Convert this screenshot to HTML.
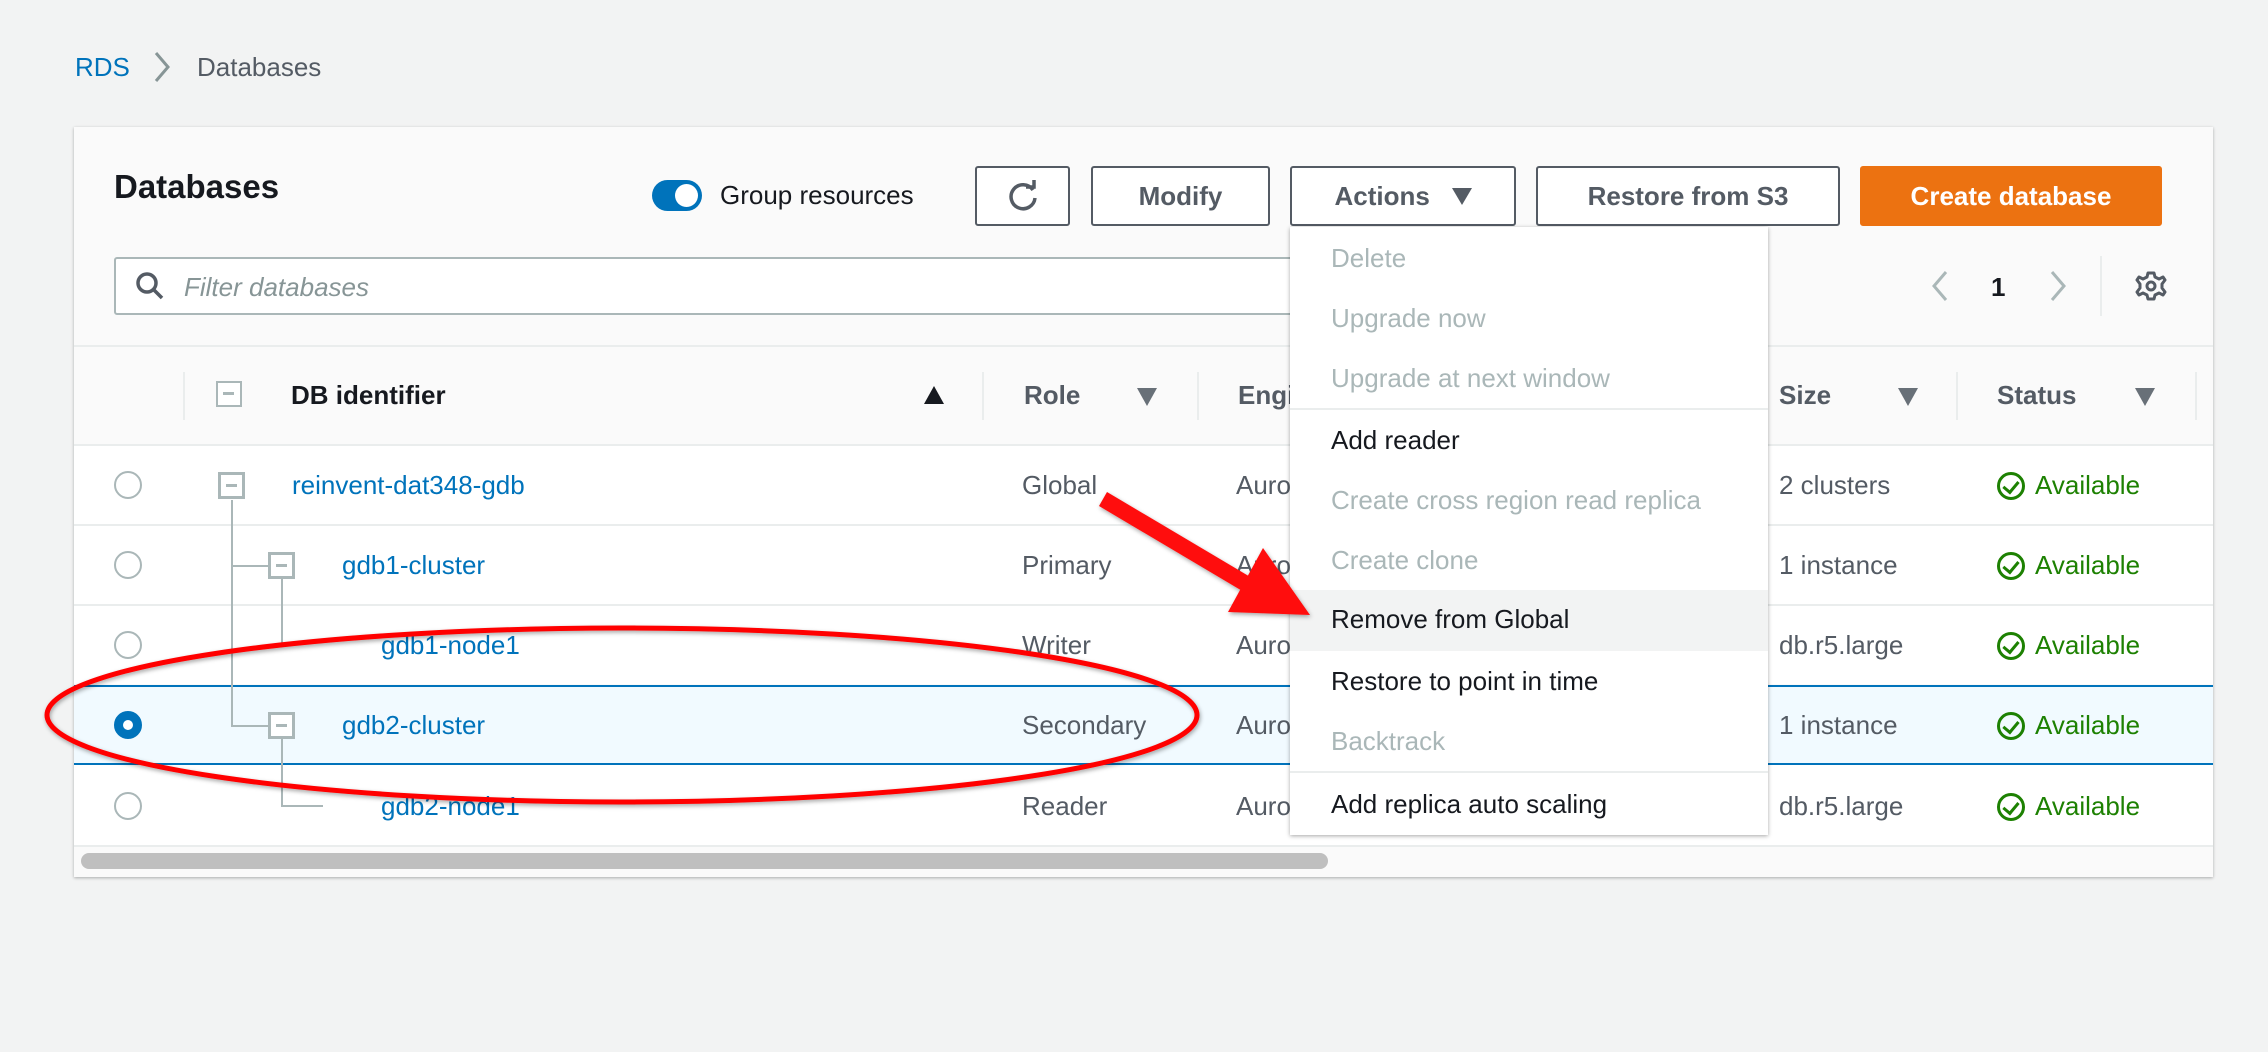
<!DOCTYPE html>
<html><head><meta charset="utf-8"><style>
*{box-sizing:border-box;margin:0;padding:0}
body{width:2268px;height:1052px;background:#f2f3f3;font-family:"Liberation Sans",sans-serif;color:#16191f;position:relative;overflow:hidden;font-size:26px}
.a{position:absolute;white-space:nowrap}
.btn{position:absolute;top:166px;height:60px;border:2px solid #545b64;border-radius:3px;background:#fff;color:#545b64;font-weight:bold;font-size:26px;display:flex;align-items:center;justify-content:center}
.row{position:absolute;left:74px;width:2139px;height:80px;background:#fff;border-top:2px solid #eaeded}
.lnk{color:#0073bb}
.mi{position:absolute;left:1331px;font-size:26px;line-height:30px}
.dis{color:#aab7b8}
.ok{color:#1d8102;display:flex;align-items:center;gap:10px}
.ok i{display:block;width:28px;height:28px;border:3px solid #1d8102;border-radius:50%;position:relative}
.ok i:after{content:"";position:absolute;left:6px;top:3px;width:7px;height:12px;border-right:3px solid #1d8102;border-bottom:3px solid #1d8102;transform:rotate(40deg)}
.radio{position:absolute;left:114px;width:28px;height:28px;border:2px solid #aab7b8;border-radius:50%;background:#fff}
.box{position:absolute;width:27px;height:27px;border:3px solid #aab7b8;background:#fff}
.box:after{content:"";position:absolute;left:5px;top:9px;width:11px;height:3px;background:#aab7b8}
.vl{position:absolute;width:2px;background:#aab7b8}
.hl{position:absolute;height:2px;background:#aab7b8}
.cd{position:absolute;top:372px;width:2px;height:48px;background:#eaeded}
.tri{position:absolute;top:386px;width:0;height:0;border-left:10px solid transparent;border-right:10px solid transparent}
.dn{border-top:18px solid #687078}
.up{border-bottom:18px solid #16191f}
</style></head><body>
<div class="a lnk" style="left:75px;top:52px">RDS</div>
<svg class="a" style="left:152px;top:50px" width="20" height="34"><path d="M4 3 L16 17 L4 31" stroke="#879596" stroke-width="3" fill="none"/></svg>
<div class="a" style="left:197px;top:52px;color:#545b64">Databases</div>

<div class="a" style="left:74px;top:127px;width:2139px;height:750px;background:#fafafa;box-shadow:0 1px 3px rgba(0,0,0,.3)"></div>
<div class="a" style="left:114px;top:168px;font-size:33px;font-weight:bold">Databases</div>
<div class="a" style="left:652px;top:180px;width:50px;height:31px;border-radius:16px;background:#0073bb"></div>
<div class="a" style="left:675px;top:184px;width:23px;height:23px;border-radius:50%;background:#fff"></div>
<div class="a" style="left:720px;top:180px">Group resources</div>
<div class="btn" style="left:975px;width:95px"><svg width="36" height="36" viewBox="0 0 36 36"><path d="M28 12 A12 12 0 1 0 30 20" stroke="#545b64" stroke-width="3.5" fill="none"/><path d="M21 9 L29 9 L29 2" stroke="#545b64" stroke-width="3.5" fill="none"/></svg></div>
<div class="btn" style="left:1091px;width:179px">Modify</div>
<div class="btn" style="left:1290px;width:226px">Actions&nbsp;&nbsp;&nbsp;<span style="display:inline-block;width:0;height:0;border-left:10px solid transparent;border-right:10px solid transparent;border-top:17px solid #545b64"></span></div>
<div class="btn" style="left:1536px;width:304px">Restore from S3</div>
<div class="btn" style="left:1860px;width:302px;background:#ec7211;border-color:#ec7211;color:#fff">Create database</div>

<div class="a" style="left:114px;top:257px;width:1200px;height:58px;border:2px solid #aab7b8;border-radius:3px;background:#fff"></div>
<svg class="a" style="left:134px;top:270px" width="32" height="32"><circle cx="13" cy="13" r="9" stroke="#545b64" stroke-width="3.5" fill="none"/><path d="M20 20 L28 28" stroke="#545b64" stroke-width="3.5"/></svg>
<div class="a" style="left:184px;top:272px;font-style:italic;color:#879596">Filter databases</div>
<svg class="a" style="left:1928px;top:268px" width="24" height="36"><path d="M18 4 L6 18 L18 32" stroke="#aab7b8" stroke-width="3" fill="none"/></svg>
<div class="a" style="left:1991px;top:272px;font-weight:bold">1</div>
<svg class="a" style="left:2046px;top:268px" width="24" height="36"><path d="M6 4 L18 18 L6 32" stroke="#aab7b8" stroke-width="3" fill="none"/></svg>
<div class="a" style="left:2100px;top:256px;width:2px;height:60px;background:#eaeded"></div>
<svg class="a" style="left:2135px;top:270px" width="32" height="32" viewBox="0 0 32 32"><path d="M16 3 L19 3 L20 7 L24 9 L28 7 L30 10 L27 14 L27 18 L30 22 L28 25 L24 23 L20 25 L19 29 L13 29 L12 25 L8 23 L4 25 L2 22 L5 18 L5 14 L2 10 L4 7 L8 9 L12 7 L13 3 Z" stroke="#545b64" stroke-width="3" fill="none" stroke-linejoin="round"/><circle cx="16" cy="16" r="4" stroke="#545b64" stroke-width="3" fill="none"/></svg>

<div class="a" style="left:74px;top:345px;width:2139px;height:2px;background:#eaeded"></div>
<div class="cd" style="left:183px"></div><div class="cd" style="left:982px"></div><div class="cd" style="left:1197px"></div><div class="cd" style="left:1956px"></div><div class="cd" style="left:2195px"></div>
<div class="box" style="left:216px;top:381px;border-width:2px;width:26px;height:26px"></div>
<div class="a" style="left:291px;top:380px;font-weight:bold">DB identifier</div>
<div class="tri up" style="left:924px"></div>
<div class="a" style="left:1024px;top:380px;font-weight:bold;color:#545b64">Role</div>
<div class="tri dn" style="left:1137px;top:388px"></div>
<div class="a" style="left:1238px;top:380px;font-weight:bold;color:#545b64">Engine</div>
<div class="a" style="left:1779px;top:380px;font-weight:bold;color:#545b64">Size</div>
<div class="tri dn" style="left:1898px;top:388px"></div>
<div class="a" style="left:1997px;top:380px;font-weight:bold;color:#545b64">Status</div>
<div class="tri dn" style="left:2135px;top:388px"></div>

<div class="row" style="top:444px"></div>
<div class="row" style="top:524px"></div>
<div class="row" style="top:604px"></div>
<div class="row" style="top:685px;background:#f1faff;border-top:2px solid #0073bb;border-bottom:2px solid #0073bb;height:80px"></div>
<div class="row" style="top:765px;border-top:none"></div>
<div class="a" style="left:74px;top:845px;width:2139px;height:2px;background:#eaeded"></div>
<div class="a" style="left:81px;top:853px;width:1247px;height:16px;border-radius:8px;background:#bfbfbf"></div>

<div class="radio" style="top:471px"></div>
<div class="radio" style="top:551px"></div>
<div class="radio" style="top:631px"></div>
<div class="radio" style="top:711px;border:9px solid #0073bb"></div>
<div class="radio" style="top:792px"></div>

<div class="vl" style="left:231px;top:500px;height:227px"></div>
<div class="hl" style="left:231px;top:565px;width:40px"></div>
<div class="hl" style="left:231px;top:725px;width:40px"></div>
<div class="vl" style="left:281px;top:578px;height:68px"></div>
<div class="vl" style="left:281px;top:738px;height:69px"></div>
<div class="hl" style="left:281px;top:805px;width:42px"></div>
<div class="box" style="left:218px;top:472px"></div>
<div class="box" style="left:268px;top:552px"></div>
<div class="box" style="left:268px;top:712px"></div>

<div class="a lnk" style="left:292px;top:470px">reinvent-dat348-gdb</div>
<div class="a lnk" style="left:342px;top:550px">gdb1-cluster</div>
<div class="a lnk" style="left:381px;top:630px">gdb1-node1</div>
<div class="a lnk" style="left:342px;top:710px">gdb2-cluster</div>
<div class="a lnk" style="left:381px;top:791px">gdb2-node1</div>
<div class="a" style="left:1022px;top:470px;color:#545b64">Global</div>
<div class="a" style="left:1022px;top:550px;color:#545b64">Primary</div>
<div class="a" style="left:1022px;top:630px;color:#545b64">Writer</div>
<div class="a" style="left:1022px;top:710px;color:#545b64">Secondary</div>
<div class="a" style="left:1022px;top:791px;color:#545b64">Reader</div>
<div class="a" style="left:1236px;top:470px;color:#545b64">Aurora</div>
<div class="a" style="left:1236px;top:550px;color:#545b64">Aurora</div>
<div class="a" style="left:1236px;top:630px;color:#545b64">Aurora</div>
<div class="a" style="left:1236px;top:710px;color:#545b64">Aurora</div>
<div class="a" style="left:1236px;top:791px;color:#545b64">Aurora</div>
<div class="a" style="left:1779px;top:470px;color:#545b64">2 clusters</div>
<div class="a" style="left:1779px;top:550px;color:#545b64">1 instance</div>
<div class="a" style="left:1779px;top:630px;color:#545b64">db.r5.large</div>
<div class="a" style="left:1779px;top:710px;color:#545b64">1 instance</div>
<div class="a" style="left:1779px;top:791px;color:#545b64">db.r5.large</div>
<div class="a ok" style="left:1997px;top:470px"><i></i>Available</div>
<div class="a ok" style="left:1997px;top:550px"><i></i>Available</div>
<div class="a ok" style="left:1997px;top:630px"><i></i>Available</div>
<div class="a ok" style="left:1997px;top:710px"><i></i>Available</div>
<div class="a ok" style="left:1997px;top:791px"><i></i>Available</div>

<div class="a" style="left:1290px;top:227px;width:478px;height:608px;background:#fff;box-shadow:0 1px 4px rgba(0,0,0,.35)"></div>
<div class="a" style="left:1290px;top:408px;width:478px;height:2px;background:#eaeded"></div>
<div class="a" style="left:1290px;top:590px;width:478px;height:61px;background:#f2f3f3"></div>
<div class="a" style="left:1290px;top:771px;width:478px;height:2px;background:#eaeded"></div>
<div class="mi dis" style="top:243px">Delete</div>
<div class="mi dis" style="top:303px">Upgrade now</div>
<div class="mi dis" style="top:363px">Upgrade at next window</div>
<div class="mi" style="top:425px">Add reader</div>
<div class="mi dis" style="top:485px">Create cross region read replica</div>
<div class="mi dis" style="top:545px">Create clone</div>
<div class="mi" style="top:604px">Remove from Global</div>
<div class="mi" style="top:666px">Restore to point in time</div>
<div class="mi dis" style="top:726px">Backtrack</div>
<div class="mi" style="top:789px">Add replica auto scaling</div>

<svg class="a" style="left:0;top:0" width="2268" height="1052">
<defs><filter id="s"><feDropShadow dx="1" dy="2" stdDeviation="2" flood-opacity=".35"/></filter></defs>
<ellipse cx="622" cy="715" rx="575" ry="87" stroke="#f00" stroke-width="5" fill="none" filter="url(#s)"/>
<g filter="url(#s)" fill="#ff0d0d">
<path d="M1099 506 L1107 492 L1252 578 L1244 592 Z"/>
<path d="M1263 548 L1228 612 L1310 615 Z"/>
</g>
</svg>
</body></html>
